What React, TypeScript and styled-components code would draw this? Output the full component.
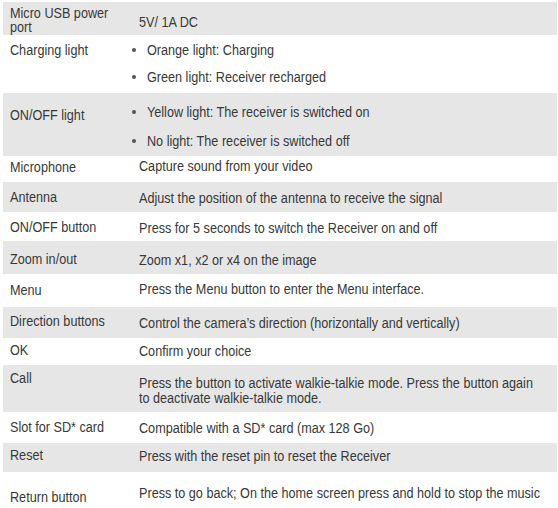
import React from 'react';
import styled, {createGlobalStyle} from 'styled-components';

const GlobalStyle = createGlobalStyle`
  html, body {
    margin: 0;
    background: #fff;
    overflow: hidden;
  }
  body {
    padding: 2px 1px 0 3px;
    font-family: "Liberation Sans", Arial, sans-serif;
    font-size: 15.5px;
    color: #383838;
  }
`;

const Table = styled.div`
  width: 554px;
  display: flex;
  flex-direction: column;
`;

const Row = styled.div<{ $h: number; $shade?: boolean }>`
  display: grid;
  grid-template-columns: 115px 439px;
  height: ${p => p.$h}px;
  overflow: hidden;
  background: ${p => (p.$shade ? '#e6e6e6' : '#fff')};
  line-height: 15px;
`;

// condensed face: the narrow grotesque is not installed, so squeeze Arial metrics
const Text = styled.span`
  display: inline-block;
  white-space: nowrap;
  transform: scaleX(0.815);
  transform-origin: left center;
`;

const Label = styled.div<{ $pt: number }>`
  padding: ${p => p.$pt}px 0 0 7px;
  line-height: 14px;
  display: flex;
  flex-direction: column;
  align-items: flex-start;
`;

const Value = styled.div<{ $pt: number }>`
  padding: ${p => p.$pt}px 0 0 21px;
  display: flex;
  flex-direction: column;
  align-items: flex-start;
`;

const Bullets = styled.ul<{ $pt: number; $gap: number }>`
  list-style: none;
  margin: 0;
  padding: ${p => p.$pt}px 0 0 14px;
  display: flex;
  flex-direction: column;
  gap: ${p => p.$gap}px;
  line-height: 14px;
`;

const Bullet = styled.li`
  display: flex;
  align-items: center;
  gap: 11px;
  &::before {
    content: '';
    flex: none;
    width: 4px;
    height: 4px;
    border-radius: 50%;
    background: #555;
  }
`;

type Line = {
  label: string[];
  h: number;
  shade: boolean;
  lpt: number;
  vpt: number;
  value?: string[];
  bullets?: string[];
  gap?: number;
};

const rows: Line[] = [
  {label: ['Micro USB power', 'port'], h: 33, shade: true, lpt: 4, vpt: 12, value: ['5V/ 1A DC']},
  {
    label: ['Charging light'], h: 58, shade: false, lpt: 8, vpt: 8, gap: 13,
    bullets: ['Orange light: Charging', 'Green light: Receiver recharged'],
  },
  {
    label: ['ON/OFF light'], h: 63, shade: true, lpt: 15, vpt: 12, gap: 15,
    bullets: ['Yellow light: The receiver is switched on', 'No light: The receiver is switched off'],
  },
  {label: ['Microphone'], h: 26, shade: false, lpt: 4, vpt: 2, value: ['Capture sound from your video']},
  {label: ['Antenna'], h: 30, shade: true, lpt: 8, vpt: 8, value: ['Adjust the position of the antenna to receive the signal']},
  {label: ['ON/OFF button'], h: 29, shade: false, lpt: 8, vpt: 8, value: ['Press for 5 seconds to switch the Receiver on and off']},
  {label: ['Zoom in/out'], h: 33, shade: true, lpt: 11, vpt: 11, value: ['Zoom x1, x2 or x4 on the image']},
  {label: ['Menu'], h: 33, shade: false, lpt: 9, vpt: 7, value: ['Press the Menu button to enter the Menu interface.']},
  {label: ['Direction buttons'], h: 31, shade: true, lpt: 7, vpt: 8, value: ['Control the camera\u2019s direction (horizontally and vertically)']},
  {label: ['OK'], h: 27, shade: false, lpt: 5, vpt: 5, value: ['Confirm your choice']},
  {
    label: ['Call'], h: 47, shade: true, lpt: 6, vpt: 10,
    value: [
      'Press the button to activate walkie-talkie mode. Press the button again',
      'to deactivate walkie-talkie mode.',
    ],
  },
  {label: ['Slot for SD* card'], h: 31, shade: false, lpt: 8, vpt: 8, value: ['Compatible with a SD* card (max 128 Go)']},
  {label: ['Reset'], h: 29, shade: true, lpt: 5, vpt: 5, value: ['Press with the reset pin to reset the Receiver']},
  {label: ['Return button'], h: 36, shade: false, lpt: 18, vpt: 13, value: ['Press to go back; On the home screen press and hold to stop the music']},
];

export default function App() {
  return (
    <>
      <GlobalStyle />
      <Table>
        {rows.map(r => (
          <Row key={r.label[0]} $h={r.h} $shade={r.shade}>
            <Label $pt={r.lpt}>
              {r.label.map(t => (
                <Text key={t}>{t}</Text>
              ))}
            </Label>
            {r.bullets ? (
              <Bullets $pt={r.vpt} $gap={r.gap ?? 13}>
                {r.bullets.map(b => (
                  <Bullet key={b}>
                    <Text>{b}</Text>
                  </Bullet>
                ))}
              </Bullets>
            ) : (
              <Value $pt={r.vpt}>
                {r.value?.map(t => (
                  <Text key={t}>{t}</Text>
                ))}
              </Value>
            )}
          </Row>
        ))}
      </Table>
    </>
  );
}
